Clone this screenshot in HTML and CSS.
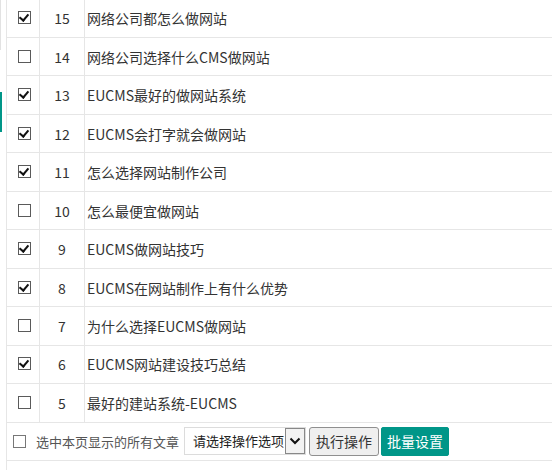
FILE: index.html
```html
<!DOCTYPE html>
<html>
<head>
    <title>文章列表</title>
    <link rel="stylesheet" href="styles.css">
</head>
<body>
    <div class="page">
        <div class="side">
            <div class="side-gray"></div>
            <div class="side-teal"></div>
        </div>
        <div class="main">
            <table class="list">
                <tr><td class="c-check"><span class="cb on"></span></td><td class="c-id">15</td><td>网络公司都怎么做网站</td></tr>
                <tr><td class="c-check"><span class="cb"></span></td><td class="c-id">14</td><td>网络公司选择什么CMS做网站</td></tr>
                <tr><td class="c-check"><span class="cb on"></span></td><td class="c-id">13</td><td>EUCMS最好的做网站系统</td></tr>
                <tr><td class="c-check"><span class="cb on"></span></td><td class="c-id">12</td><td>EUCMS会打字就会做网站</td></tr>
                <tr><td class="c-check"><span class="cb on"></span></td><td class="c-id">11</td><td>怎么选择网站制作公司</td></tr>
                <tr><td class="c-check"><span class="cb"></span></td><td class="c-id">10</td><td>怎么最便宜做网站</td></tr>
                <tr><td class="c-check"><span class="cb on"></span></td><td class="c-id">9</td><td>EUCMS做网站技巧</td></tr>
                <tr><td class="c-check"><span class="cb on"></span></td><td class="c-id">8</td><td>EUCMS在网站制作上有什么优势</td></tr>
                <tr><td class="c-check"><span class="cb"></span></td><td class="c-id">7</td><td>为什么选择EUCMS做网站</td></tr>
                <tr><td class="c-check"><span class="cb on"></span></td><td class="c-id">6</td><td>EUCMS网站建设技巧总结</td></tr>
                <tr><td class="c-check"><span class="cb"></span></td><td class="c-id">5</td><td>最好的建站系统-EUCMS</td></tr>
            </table>
            <div class="footer">
                <span class="cb light"></span>
                <span class="all-text">选中本页显示的所有文章</span>
                <div class="select">
                    <span class="select-text">请选择操作选项</span>
                    <span class="select-arrow">
                        <svg width="12" height="8" viewBox="0 0 12 8"><path d="M1.5 1.5 L6 6 L10.5 1.5" fill="none" stroke="#111" stroke-width="2"/></svg>
                    </span>
                </div>
                <button class="btn">执行操作</button>
                <button class="btn btn-teal">批量设置</button>
            </div>
        </div>
    </div>
</body>
</html>
```

FILE: styles.css
```css
html, body { margin: 0; padding: 0; background: #fff; overflow: hidden; }
body { font-family: "Noto Sans CJK SC", "Microsoft YaHei", sans-serif; color: #333; width: 552px; height: 470px; }
.page { display: flex; height: 470px; }
.side { width: 6px; flex: none; display: flex; flex-direction: column; }
.side-gray { width: 1px; height: 50px; background: #e2e2e2; }
.side-teal { width: 2px; height: 40px; margin-top: 42px; background: #009688; }
.main { flex: none; width: 560px; border-left: 1px solid #e6e6e6; }
.list { border-collapse: collapse; width: 100%; margin-top: -1.5px; }
.list td { height: 37.47px; padding: 0; border-top: 1px solid #e6e6e6; border-bottom: 1px solid #e6e6e6; font-size: 14px; line-height: 20px; color: #333; }
.list td + td { border-left: 1px solid #e6e6e6; }
.list td:last-child { padding-left: 2px; }
.c-check { width: 32px; text-align: center; }
.c-check .cb { margin: 3px 0 0 3px; }
.c-id { width: 44px; text-align: center; color: #444; }
.cb { display: inline-block; width: 11px; height: 11px; border: 1px solid #5a5a5a; position: relative; vertical-align: top; }
.cb.on::after { content: ""; position: absolute; left: 2px; top: 0px; width: 4px; height: 7px; border-right: 2px solid #111; border-bottom: 2px solid #111; transform: rotate(40deg); }
.cb.light { border-color: #777; margin: 0 10px 0 6px; }
.footer { display: flex; align-items: center; height: 37px; border-bottom: 1px solid #e6e6e6; }
.all-text { font-size: 13px; color: #555; }
.select { display: flex; height: 28px; margin-left: 5px; border: 1px solid #dcdcdc; box-sizing: border-box; }
.select-text { font-size: 13px; line-height: 26px; padding: 0 1px 0 8px; color: #222; }
.select-arrow { width: 18px; border: 1px solid #888; background: #f2f2f2; display: flex; align-items: center; justify-content: center; }
.btn { font-family: inherit; font-size: 14px; height: 29px; width: 70px; padding: 0; margin-left: 3px; border: 1px solid #8f8f8f; border-radius: 3px; background: #efefef; color: #333; }
.btn-teal { width: 68px; margin-left: 2px; border-color: #009688; border-radius: 2px; background: #009688; color: #fff; }
```
